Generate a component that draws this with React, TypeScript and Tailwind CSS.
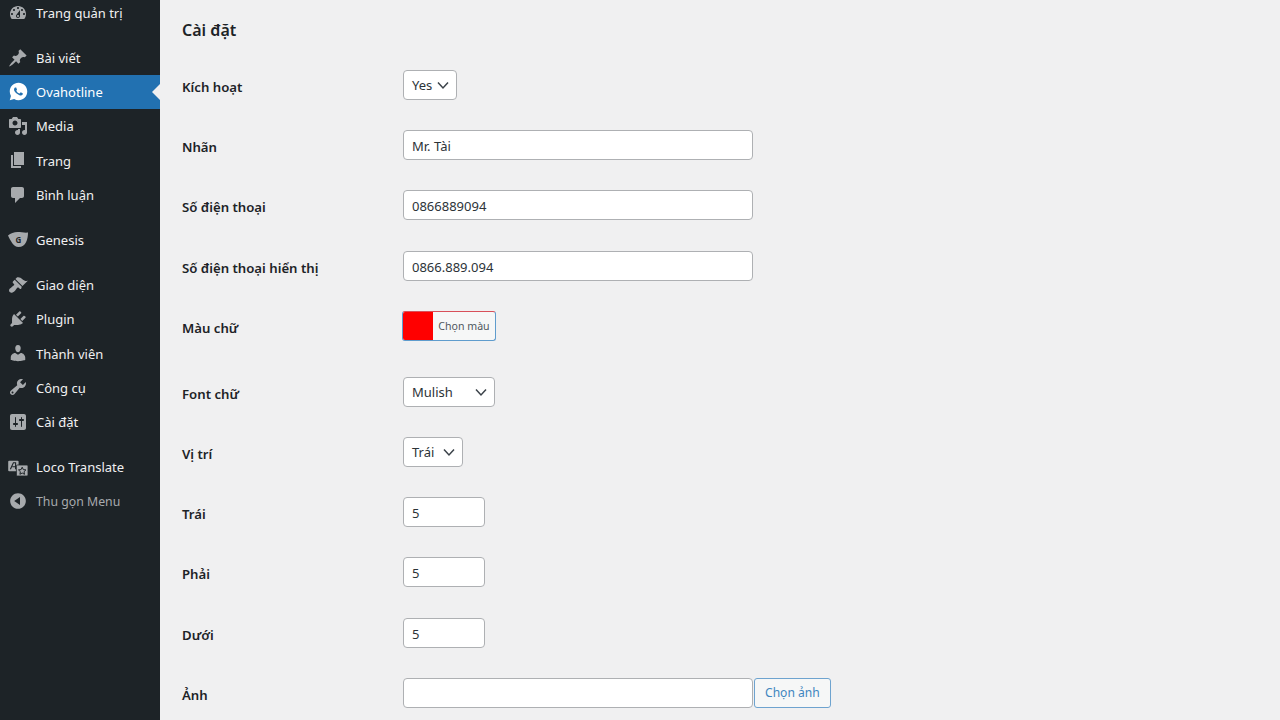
import type { ReactNode } from "react";
import { RiWhatsappFill } from "react-icons/ri";

const ICONS: Record<string, string> = {
  dashboard:
    "M3.76 16h12.48c1.1-1.37 1.76-3.11 1.76-5 0-4.42-3.58-8-8-8s-8 3.58-8 8c0 1.89.66 3.63 1.76 5zM10 4c.55 0 1 .45 1 1s-.45 1-1 1-1-.45-1-1 .45-1 1-1zM6 6c.55 0 1 .45 1 1s-.45 1-1 1-1-.45-1-1 .45-1 1-1zm8 0c.55 0 1 .45 1 1s-.45 1-1 1-1-.45-1-1 .45-1 1-1zm-5.37 5.55L12 7v6c0 1.1-.9 2-2 2s-2-.9-2-2c0-.57.24-1.08.63-1.45zM4 10c.55 0 1 .45 1 1s-.45 1-1 1-1-.45-1-1 .45-1 1-1zm12 0c.55 0 1 .45 1 1s-.45 1-1 1-1-.45-1-1 .45-1 1-1zm-5 3c0-.55-.45-1-1-1s-1 .45-1 1 .45 1 1 1 1-.45 1-1z",
  post: "M10.44 3.02l1.82-1.82 6.36 6.35-1.83 1.82c-1.05-.68-2.48-.57-3.41.36l-.75.75c-.92.93-1.04 2.35-.35 3.41l-1.83 1.82-2.41-2.41-2.8 2.79c-.42.42-3.38 2.71-3.8 2.29s1.86-3.39 2.28-3.81l2.79-2.79L4.1 9.36l1.83-1.82c1.05.69 2.48.57 3.4-.36l.75-.75c.93-.92 1.05-2.35.36-3.41z",
  media:
    "M13 11V4c0-.55-.45-1-1-1h-1.67L9 1H5L3.67 3H2c-.55 0-1 .45-1 1v7c0 .55.45 1 1 1h10c.55 0 1-.45 1-1zM7 4.5c1.38 0 2.5 1.12 2.5 2.5S8.38 9.5 7 9.5 4.5 8.38 4.5 7 5.62 4.5 7 4.5zM14 6h5v10.5c0 1.38-1.12 2.5-2.5 2.5S14 17.88 14 16.5s1.12-2.5 2.5-2.5c.17 0 .34.02.5.05V9h-3V6zm-4 8.05V13h2v3.5c0 1.38-1.12 2.5-2.5 2.5S7 17.88 7 16.5 8.12 14 9.5 14c.17 0 .34.02.5.05z",
  page: "M6 15V2h10v13H6zm-1 1h8v2H3V5h2v11z",
  comments: "M5 2h9c1.1 0 2 .9 2 2v7c0 1.1-.9 2-2 2h-2l-5 5v-5H5c-1.1 0-2-.9-2-2V4c0-1.1.9-2 2-2z",
  appearance:
    "M14.48 11.06L7.41 3.99l1.5-1.5c.5-.56 2.3-.47 3.51.32 1.21.8 1.43 1.28 2.91 2.1 1.18.64 2.45 1.26 4.45.85zm-.71.71L6.7 4.7 4.93 6.47c-.39.39-.39 1.02 0 1.41l1.06 1.06c.39.39.39 1.03 0 1.42-.6.6-1.43 1.11-2.21 1.69-.35.26-.7.53-1.01.84C1.43 13.23.76 14.91 1.1 16.1c.1.36.27.67.54.93.26.26.57.45.93.55 1.19.34 2.86-.33 4.2-1.68.31-.31.58-.66.85-1.02.57-.78 1.08-1.61 1.69-2.21.39-.39 1.02-.39 1.41 0l1.06 1.06c.39.39 1.02.39 1.41 0z",
  plugins:
    "M13.11 4.36L9.87 7.6 8 5.73l3.24-3.24c.35-.34 1.05-.2 1.56.32.52.51.66 1.21.31 1.55zm-8 1.77l.91-1.12 9.01 9.01-1.19.84c-.71.71-2.63 1.16-3.82 1.16H6.14L4.9 17.26c-.59.59-1.54.59-2.12 0-.59-.58-.59-1.53 0-2.12l1.24-1.24v-3.88c0-1.13.4-3.19 1.09-3.89zm7.26 3.97l3.24-3.24c.34-.35 1.04-.21 1.55.31.52.51.66 1.21.31 1.55l-3.24 3.25z",
  users:
    "M10 9.25c-2.27 0-2.73-3.44-2.73-3.44C7 4.02 7.82 2 9.97 2c2.16 0 2.98 2.02 2.71 3.81 0 0-.41 3.44-2.68 3.44zm0 2.57L12.72 10c2.39 0 4.52 2.33 4.52 4.53v2.49s-3.65 1.13-7.24 1.13c-3.65 0-7.24-1.13-7.24-1.13v-2.49c0-2.25 1.94-4.48 4.47-4.48z",
  tools:
    "M16.68 9.77c-1.34 1.34-3.3 1.67-4.95.99l-5.41 6.52c-.99.99-2.59.99-3.58 0s-.99-2.59 0-3.57l6.52-5.42c-.68-1.65-.35-3.61.99-4.95 1.28-1.28 3.12-1.62 4.72-1.06l-2.89 2.89 2.82 2.82 2.86-2.87c.53 1.58.18 3.39-1.08 4.65zM3.81 16.21c.4.39 1.04.39 1.43 0 .4-.4.4-1.04 0-1.43-.39-.4-1.03-.4-1.43 0-.39.39-.39 1.03 0 1.43z",
  settings:
    "M18 16V4c0-1.1-.9-2-2-2H4c-1.1 0-2 .9-2 2v12c0 1.1.9 2 2 2h12c1.1 0 2-.9 2-2zM8 11h1c.55 0 1 .45 1 1s-.45 1-1 1H8v1.5c0 .28-.22.5-.5.5s-.5-.22-.5-.5V13H6c-.55 0-1-.45-1-1s.45-1 1-1h1V5.5c0-.28.22-.5.5-.5s.5.22.5.5V11zm5-2h-1c-.55 0-1-.45-1-1s.45-1 1-1h1V5.5c0-.28.22-.5.5-.5s.5.22.5.5V7h1c.55 0 1 .45 1 1s-.45 1-1 1h-1v5.5c0 .28-.22.5-.5.5s-.5-.22-.5-.5V9z",
  collapse: "M10 2.16c4.33 0 7.84 3.51 7.84 7.84s-3.51 7.84-7.84 7.84S2.16 14.33 2.16 10 5.71 2.16 10 2.16zm2 11.72V6.12L6.18 9.97z",
};

function Dash({ name }: { name: string }) {
  return (
    <svg viewBox="0 0 20 20" className="h-5 w-5 fill-[#a7aaad]">
      <path d={ICONS[name]} />
    </svg>
  );
}

function GenesisIcon() {
  return (
    <svg viewBox="0 0 20 20" className="h-5 w-5">
      <path d="M0 5.5C2.5 3.5 6 2 9.5 2C13 2 17 3 20 2.5C20 9 18 17 10.5 17C5.5 17 2.5 10.5 0 5.5Z" fill="#a7aaad" />
      <text x="10.5" y="12.6" textAnchor="middle" fontSize="8" fontWeight="700" fill="#1d2327" fontFamily="'Noto Sans', sans-serif">
        G
      </text>
    </svg>
  );
}

function LocoIcon() {
  return (
    <svg viewBox="0 0 20 20" className="h-5 w-5">
      <rect x="0.2" y="3.8" width="10.4" height="10.4" rx="1" fill="#a7aaad" />
      <path d="M2.4 12.2L5.4 5.8H7.6V12.2M4.4 9.8H7.6" fill="none" stroke="#1d2327" strokeWidth="1.1" />
      <rect x="8.4" y="8" width="11.6" height="11" rx="1" fill="#a7aaad" stroke="#1d2327" strokeWidth="0.8" />
      <path d="M14.2 10.2l1.1 2.4 2.6.3-1.9 1.8.5 2.6-2.3-1.3-2.3 1.3.5-2.6-1.9-1.8 2.6-.3z" fill="none" stroke="#1d2327" strokeWidth="1" />
    </svg>
  );
}

function MenuItem({ icon, label, active, muted, gap }: { icon: ReactNode; label: string; active?: boolean; muted?: boolean; gap?: boolean }) {
  return (
    <div
      className={`relative flex h-[34.2px] items-center ${muted ? "text-[12.3px]" : "text-[13px]"} ${gap ? "mt-[11px]" : ""} ${
        active ? "bg-[#2271b1] text-white" : muted ? "text-[#a7aaad]" : "text-[#f0f0f1]"
      }`}
    >
      <span className="flex w-[36px] shrink-0 justify-center">{icon}</span>
      <span className="pt-[2px]">{label}</span>
      {active && (
        <span className="absolute right-0 top-1/2 -mt-2 h-0 w-0 border-y-8 border-r-8 border-y-transparent border-r-[#f0f0f1]" />
      )}
    </div>
  );
}

function Row({ label, children, top = "mt-[30px]" }: { label: string; children: ReactNode; top?: string }) {
  return (
    <div className={`flex h-[30px] items-center ${top}`}>
      <label className="w-[221px] shrink-0 pt-[5px] text-[13.2px] font-semibold text-[#1d2327]">{label}</label>
      {children}
    </div>
  );
}

function TextBox({ value, width }: { value: string; width: string }) {
  return (
    <input
      readOnly
      defaultValue={value}
      className={`h-[30px] ${width} rounded-[4px] border border-[#aeb0b3] bg-white px-2 pt-px text-[13px] text-[#2c3338] outline-none`}
    />
  );
}

function SelectBox({ value, width }: { value: string; width: string }) {
  return (
    <div className={`relative flex h-[30px] ${width} items-center rounded-[4px] border border-[#aeb0b3] bg-white pl-2 pt-px text-[13px] text-[#2c3338]`}>
      {value}
      <svg viewBox="0 0 20 20" className="absolute right-[3px] top-[4px] h-5 w-5 fill-none stroke-[#3c434a] stroke-[1.5]">
        <path d="M5 7.5l5 5.5 5-5.5" />
      </svg>
    </div>
  );
}

export default function App() {
  return (
    <div className="flex h-[720px] w-[1280px] overflow-hidden bg-[#f0f0f1] font-['Noto_Sans',sans-serif]">
      <aside className="w-[160px] shrink-0 bg-[#1d2327]">
        <div className="-mt-[4.5px]">
          <MenuItem icon={<Dash name="dashboard" />} label="Trang quản trị" />
          <MenuItem gap icon={<Dash name="post" />} label="Bài viết" />
          <MenuItem active icon={<RiWhatsappFill className="h-[21px] w-[21px] text-white" />} label="Ovahotline" />
          <MenuItem icon={<Dash name="media" />} label="Media" />
          <MenuItem icon={<Dash name="page" />} label="Trang" />
          <MenuItem icon={<Dash name="comments" />} label="Bình luận" />
          <MenuItem gap icon={<GenesisIcon />} label="Genesis" />
          <MenuItem gap icon={<Dash name="appearance" />} label="Giao diện" />
          <MenuItem icon={<Dash name="plugins" />} label="Plugin" />
          <MenuItem icon={<Dash name="users" />} label="Thành viên" />
          <MenuItem icon={<Dash name="tools" />} label="Công cụ" />
          <MenuItem icon={<Dash name="settings" />} label="Cài đặt" />
          <MenuItem gap icon={<LocoIcon />} label="Loco Translate" />
          <MenuItem muted icon={<Dash name="collapse" />} label="Thu gọn Menu" />
        </div>
      </aside>

      <main className="flex-1 pl-[22px]">
        <h2 className="-mb-[20px] flex h-[60px] items-center text-[16px] font-semibold text-[#1d2327]">Cài đặt</h2>
        <Row label="Kích hoạt">
          <SelectBox value="Yes" width="w-[54px]" />
        </Row>
        <Row label="Nhãn">
          <TextBox value="Mr. Tài" width="w-[350px]" />
        </Row>
        <Row label="Số điện thoại">
          <TextBox value="0866889094" width="w-[350px]" />
        </Row>
        <Row top="mt-[31px]" label="Số điện thoại hiển thị">
          <TextBox value="0866.889.094" width="w-[350px]" />
        </Row>
        <Row label="Màu chữ">
          <button className="-ml-px flex h-[30px] w-[94px] overflow-hidden rounded-[3px] border border-[#5f9ccd] border-t-[#d8505a] bg-[#f6f7f7] p-0 text-[#50575e]">
            <span className="h-full w-[30px] bg-[#ff0000]" />
            <span className="flex flex-1 items-center justify-center pt-px text-[10.6px]">Chọn màu</span>
          </button>
        </Row>
        <Row top="mt-[36px]" label="Font chữ">
          <SelectBox value="Mulish" width="w-[92px]" />
        </Row>
        <Row label="Vị trí">
          <SelectBox value="Trái" width="w-[60px]" />
        </Row>
        <Row label="Trái">
          <TextBox value="5" width="w-[82px]" />
        </Row>
        <Row label="Phải">
          <TextBox value="5" width="w-[82px]" />
        </Row>
        <Row top="mt-[31px]" label="Dưới">
          <TextBox value="5" width="w-[82px]" />
        </Row>
        <Row label="Ảnh">
          <TextBox value="" width="w-[350px]" />
          <button className="ml-px h-[30px] rounded-[3px] border border-[#6ea3cf] bg-[#f6f7f7] px-[10px] pt-px text-[12.1px] text-[#3f86bf]">Chọn ảnh</button>
        </Row>
      </main>
    </div>
  );
}
